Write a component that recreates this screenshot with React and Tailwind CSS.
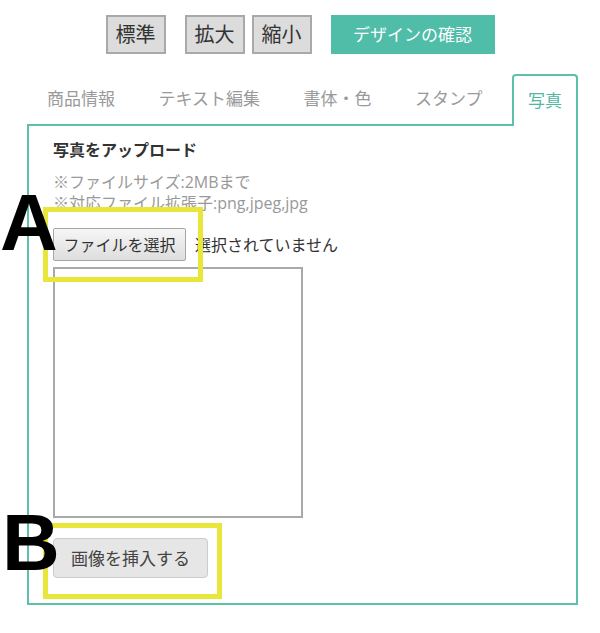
const jp = { fontFamily: '"Open Sans", "Noto Sans CJK JP", sans-serif' }
const letter = { fontFamily: '"Liberation Sans", Arial, sans-serif' }

function SizeButton({ label, className = '' }) {
  return (
    <button
      type="button"
      className={`h-[39px] w-[60px] border-2 border-[#a9a9a9] bg-[#dcdcdc] text-[20px] text-[#333] leading-none ${className}`}
    >
      {label}
    </button>
  )
}

const tabs = ['商品情報', 'テキスト編集', '書体・色', 'スタンプ', '写真']

export default function App() {
  return (
    <div className="relative w-[600px] h-[633px] bg-white overflow-hidden" style={jp}>
      <div className="flex justify-center pt-[15px]">
        <SizeButton label="標準" />
        <SizeButton label="拡大" className="ml-[19px]" />
        <SizeButton label="縮小" className="ml-[7px]" />
        <button
          type="button"
          className="ml-[19px] h-[39px] w-[164px] bg-[#4fbda7] text-white text-[17px] leading-none"
        >
          デザインの確認
        </button>
      </div>

      <div className="flex items-end gap-[15.5px] pl-[33px] mt-[20px]">
        {tabs.map((t) => {
          const active = t === '写真'
          return (
            <div
              key={t}
              className={
                active
                  ? 'relative z-10 -mb-[2px] h-[52px] px-[14px] flex items-center border-2 border-b-0 border-[#5cc0ab] rounded-t-[4px] bg-white text-[#4fb7a2] text-[17px]'
                  : 'h-[50px] px-[14px] flex items-center text-[#9a9a9a] text-[17px]'
              }
            >
              {t}
            </div>
          )
        })}
      </div>

      <div className="ml-[27px] w-[551px] h-[481px] border-2 border-[#5cc0ab] pl-[24px] pt-[14px]">
        <div className="text-[16px] font-bold text-[#333] leading-[20px]">写真をアップロード</div>
        <div className="mt-[12px] text-[16px] text-[#999] leading-[21px]">
          <div>※ファイルサイズ:2MBまで</div>
          <div>※対応ファイル拡張子:png,jpeg,jpg</div>
        </div>
        <div className="mt-[14px] flex items-center">
          <button
            type="button"
            className="h-[33px] w-[133px] border border-[#a6a6a6] rounded-[2px] bg-gradient-to-b from-[#f6f6f6] to-[#dedede] text-[16px] text-[#333] leading-none"
          >
            ファイルを選択
          </button>
          <span className="ml-[9px] text-[16px] text-[#333] leading-none">選択されていません</span>
        </div>
        <div className="mt-[6px] w-[250px] h-[251px] border-2 border-[#a9a9a9]" />
        <button
          type="button"
          className="mt-[20px] h-[40px] w-[155px] border border-[#cccccc] rounded-[4px] bg-[#e6e6e6] text-[17px] text-[#444] leading-none"
        >
          画像を挿入する
        </button>
      </div>

      <div className="absolute left-[43px] top-[207px] w-[160px] h-[75px] border-[5px] border-[#e8e63a]" />
      <div className="absolute left-[43px] top-[523px] w-[179px] h-[76px] border-[5px] border-[#e8e63a]" />

      <div className="absolute left-0 top-[183px] text-[80px] font-bold leading-none text-black" style={letter}>
        A
      </div>
      <div className="absolute left-[2px] top-[503px] text-[80px] font-bold leading-none text-black" style={letter}>
        B
      </div>
    </div>
  )
}
